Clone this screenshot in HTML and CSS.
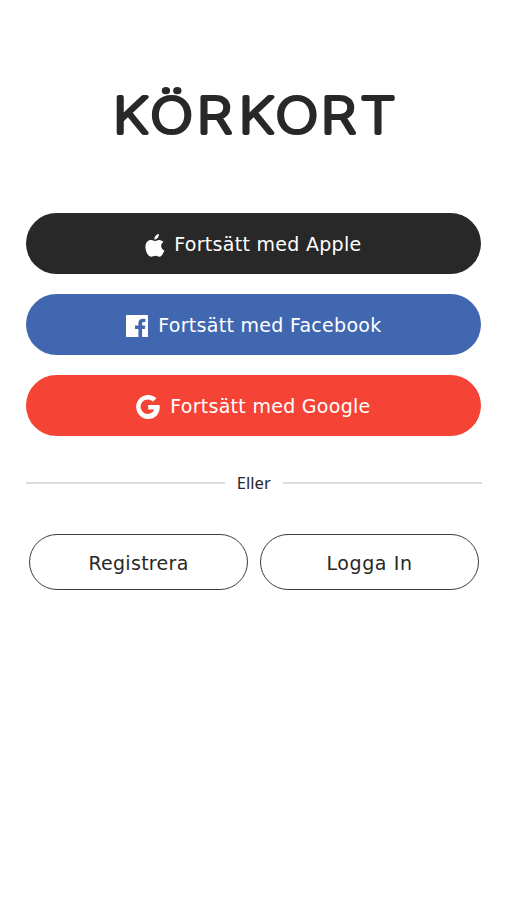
FILE: index.html
```html
<!DOCTYPE html>
<html lang="sv">
<head>
<meta charset="utf-8">
<title>Körkort</title>
<link rel="stylesheet" href="styles.css">
</head>
<body>
<main class="screen">
  <h1 class="brand">
    <svg class="wordmark" viewBox="0 0 300 64" role="img" aria-label="KÖRKORT">
      <text y="51.3" x="6.9 38.7 78.5 114.3 145.8 184.4 218.2">KÖRKORT</text>
    </svg>
  </h1>
  <div class="social">
    <button class="btn apple">
      <svg class="icon" viewBox="0 0 20 24"><path d="M13.9 0C14.2 2.8 11.9 5.6 9.4 5.5C9.1 2.9 11.4.3 13.9 0ZM10 7C11 7 12.2 5.9 14.2 5.9C16 5.9 17.6 6.9 18.5 8.1C15 10.2 15.5 15 19.4 16.5C18.6 18.7 16.7 22.6 14.6 22.8C13.1 22.9 12.2 21.8 10.4 21.8C8.6 21.8 7.6 22.8 6.3 22.8C3.4 22.8.4 17.5.4 13C.4 8.5 3.2 6 6 6C7.8 6 9.1 7 10 7Z"/></svg>
      <span class="label">Fortsätt med Apple</span>
    </button>
    <button class="btn facebook">
      <svg class="icon" viewBox="0 0 22 22"><path d="M.6 0H21.4A.6.6 0 0 1 22 .6V21.4A.6.6 0 0 1 21.4 22H16.1V14H18.8L19.3 10.6H16.1V8.6C16.1 7.6 16.5 7 17.7 7H19.4V3.9C19 3.8 18 3.7 16.9 3.7C14.2 3.7 12.4 5.2 12.4 8V10.6H9V14H12.4V22H.6A.6.6 0 0 1 0 21.4V.6A.6.6 0 0 1 .6 0Z"/></svg>
      <span class="label">Fortsätt med Facebook</span>
    </button>
    <button class="btn google">
      <svg class="icon" viewBox="0 0 24 24"><path d="M12.2 9.9H23.6C24.6 17.8 19.7 24 12.2 24A12 12 0 1 1 20.4 3.3L16.9 6.7A7.2 7.2 0 1 0 18.4 14.5H12.2Z"/></svg>
      <span class="label">Fortsätt med Google</span>
    </button>
  </div>
  <div class="divider"><span>Eller</span></div>
  <div class="actions">
    <button class="outline"><span>Registrera</span></button>
    <button class="outline login"><span>Logga In</span></button>
  </div>
</main>
</body>
</html>
```
FILE: styles.css
```css
* { box-sizing: border-box; }
body { margin: 0; background: #fff; color: #282828; }
.screen { width: 507px; height: 900px; padding: 82px 26px 0; }
.brand { margin: 0; height: 131.4px; }
.wordmark { display: block; width: 300px; height: 64px; margin-left: 79px; overflow: visible; }
.wordmark text {
  font: 200 48.5px Inter, sans-serif;
  fill: #282828;
  stroke: #282828;
  stroke-width: 3.8px;
  stroke-linejoin: round;
  transform: scale(1.17, 1);
}
button { font: 19px "DejaVu Sans", Verdana, sans-serif; letter-spacing: .29px; border: 0; padding: 0; margin: 0; }
.social { display: flex; flex-direction: column; gap: 19.6px; }
.btn {
  display: flex; align-items: center; justify-content: center;
  height: 61px; border-radius: 31px; color: #fff;
  width: 455px; margin-left: .4px;
}
.label { padding-top: 1px; }
.icon { fill: #fff; margin-top: 4px; flex: none; }
.apple { background: #282828; }
.apple .icon { width: 20px; height: 24px; margin-left: -1px; margin-right: 9px; }
.facebook { background: #4167b0; }
.facebook .icon { width: 22px; height: 22px; margin-right: 10px; }
.google { background: #f54335; }
.google .icon { width: 24px; height: 24px; margin-left: -1px; margin-right: 10px; }
.divider {
  display: flex; align-items: center; gap: 12px; margin-top: 35px; height: 24px; width: 455.5px;
  font: 16.6px "Noto Sans", sans-serif;
}
.divider::before, .divider::after { content: ""; flex: 1; height: 2px; background: #dcdcdc; }
.actions { display: flex; gap: 12px; margin: 39px 2px 0 3px; }
.outline { flex: 1; height: 56px; padding-top: 2px; border: 1.3px solid #3c3c3c; border-radius: 28px; background: #fff; color: #282828; }
.login { letter-spacing: .6px; }
```
